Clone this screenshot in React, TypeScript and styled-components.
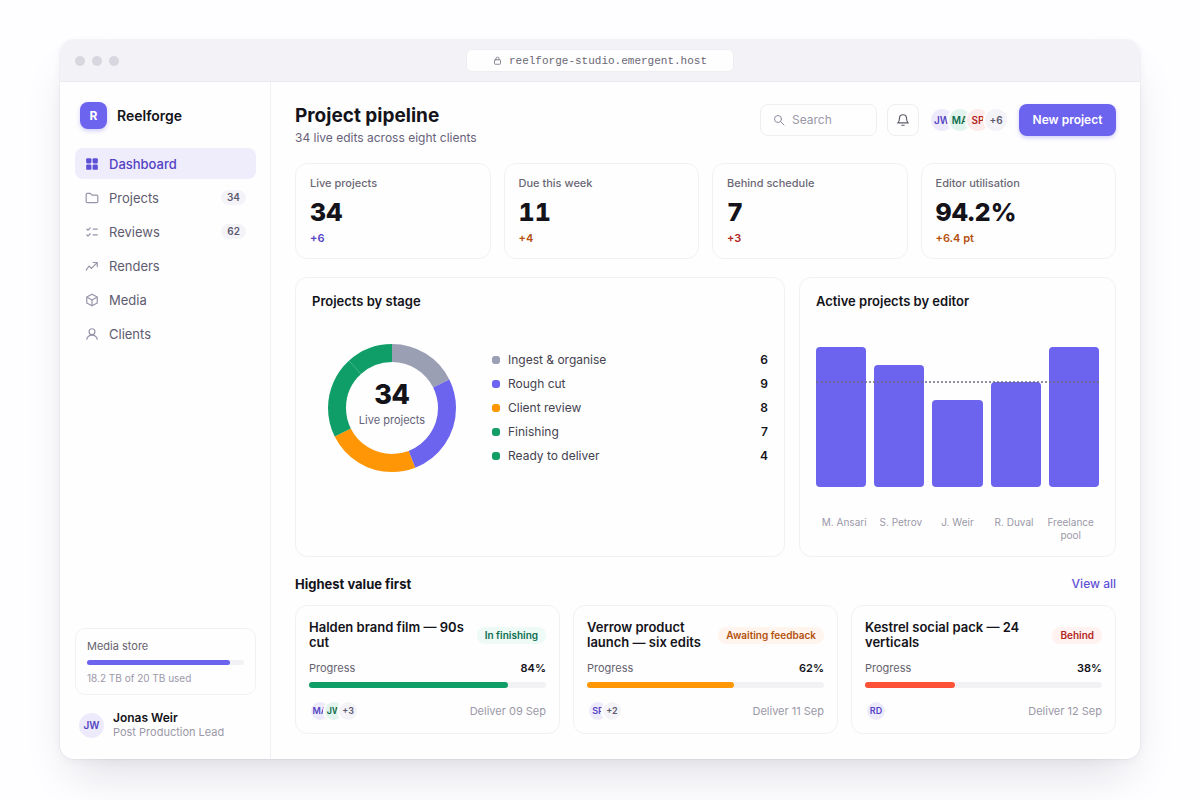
import React from "react";
import styled, { createGlobalStyle } from "styled-components";

const accent = "#6c63ee";

const tones = {
  violet: { fg: "#5443c3", bg: "#edebfb", soft: "#f3f1fd" },
  green: { fg: "#0b6e4f", bg: "#e3f4ee", soft: "#eefaf6" },
  red: { fg: "#b3261e", bg: "#fdeaea", soft: "#fff2f0" },
  grey: { fg: "#5d5970", bg: "#f4f3f7", soft: "#f7f6fa" },
  orange: { fg: "#b4500b", bg: "#fff3ea", soft: "#fff5ee" },
};
type Tone = keyof typeof tones;

const GlobalStyle = createGlobalStyle`
  *, *::before, *::after { box-sizing: border-box; }
  body {
    margin: 0;
    background: #fefdff;
    color: #14131a;
    font-family: Inter, "Liberation Sans", sans-serif;
    font-size: 13px;
    line-height: 16px;
  }
  h1, h2, h3, p, ul, dl, dd { margin: 0; padding: 0; }
  ul { list-style: none; }
  a { color: inherit; text-decoration: none; }
  button, input { font: inherit; }
`;

const Page = styled.div`
  display: flex;
  min-height: 100vh;
  padding: 40px 60px 41px;
`;

const Window = styled.div`
  flex: 1;
  min-width: 0;
  display: flex;
  flex-direction: column;
  border-radius: 14px;
  overflow: hidden;
  background: #fefefe;
  box-shadow: 0 0 0 1px rgba(24, 20, 50, 0.03), 0 24px 48px -12px rgba(24, 20, 50, 0.14), 0 2px 8px rgba(24, 20, 50, 0.04);
`;

const TitleBar = styled.div`
  display: grid;
  grid-template-columns: 1fr auto 1fr;
  align-items: center;
  height: 42px;
  padding: 0 15px;
  background: #f3f2f7;
  border-bottom: 1px solid #ebeaf0;
`;

const Lights = styled.div`
  display: flex;
  gap: 7px;
`;

const Light = styled.span`
  width: 10px;
  height: 10px;
  border-radius: 50%;
  background: #d8d6de;
`;

const Address = styled.div`
  display: flex;
  align-items: center;
  justify-content: center;
  gap: 7px;
  width: 268px;
  height: 23px;
  border: 1px solid #eeedf2;
  border-radius: 6px;
  background: #fefefe;
  color: #6a6775;
  font: 11px/14px "Liberation Mono", monospace;
`;

const Body = styled.div`
  flex: 1;
  display: flex;
`;

const Sidebar = styled.aside`
  flex: none;
  display: flex;
  flex-direction: column;
  width: 211px;
  padding: 20px 14px 19px 15px;
  border-right: 1px solid #f1f0f5;
`;

const Brand = styled.div`
  display: flex;
  align-items: center;
  gap: 10px;
  padding: 0 5px;
  margin-bottom: 19px;
  font-size: 14px;
  font-weight: 600;
`;

const BrandMark = styled.span`
  display: grid;
  place-items: center;
  width: 27px;
  height: 27px;
  border-radius: 8px;
  background: ${accent};
  box-shadow: 0 2px 4px rgba(108, 99, 238, 0.3);
  color: #fff;
  font-size: 12px;
  font-weight: 700;
`;

const Nav = styled.nav`
  display: flex;
  flex-direction: column;
  gap: 3px;
`;

const NavLink = styled.a<{ $active?: boolean }>`
  display: flex;
  align-items: center;
  gap: 10px;
  height: 31px;
  padding: 0 10px;
  border-radius: 8px;
  background: ${(p) => (p.$active ? "#efecfc" : "transparent")};
  color: ${(p) => (p.$active ? "#5443c3" : "#5f5b70")};
  font-weight: ${(p) => (p.$active ? 500 : 400)};
  svg { color: ${(p) => (p.$active ? "#5f51d6" : "#9692a8")}; }
`;

const Count = styled.span`
  margin-left: auto;
  padding: 0 6px;
  border-radius: 8px;
  background: #f4f3f8;
  color: #5d5970;
  font-size: 10px;
  font-weight: 600;
  line-height: 15px;
`;

const Storage = styled.section`
  display: flex;
  flex-direction: column;
  margin-top: auto;
  padding: 10px 11px 9px;
  border: 1px solid #f1f0f5;
  border-radius: 10px;
  font-size: 11px;
  line-height: 14px;
`;

const Muted = styled.span`
  color: #66636f;
`;

const Faint = styled.span`
  color: #9b98a8;
`;

const StorageNote = styled(Faint)`
  font-size: 10px;
`;

const Track = styled.div<{ $size: number; $gap: string }>`
  height: ${(p) => p.$size}px;
  margin: ${(p) => p.$gap};
  border-radius: 3px;
  background: #f2f2f5;
`;

const Fill = styled.div<{ $color: string }>`
  height: 100%;
  border-radius: 3px;
  background: ${(p) => p.$color};
`;

const User = styled.div`
  display: flex;
  align-items: center;
  gap: 9px;
  margin-top: 15px;
  padding: 0 4px;
  font-size: 11px;
  line-height: 15px;
`;

const UserAvatar = styled.span`
  display: grid;
  place-items: center;
  width: 25px;
  height: 25px;
  border-radius: 50%;
  background: #edebfb;
  color: #5443c3;
  font-size: 10px;
  font-weight: 600;
`;

const UserText = styled.div`
  display: flex;
  flex-direction: column;
  strong { font-size: 12px; font-weight: 600; }
`;

const Main = styled.main`
  flex: 1;
  min-width: 0;
  display: flex;
  flex-direction: column;
  gap: 18px;
  padding: 22px 24px 24px;
`;

const Header = styled.header`
  display: flex;
  align-items: flex-start;
  justify-content: space-between;
`;

const Title = styled.h1`
  font-size: 19px;
  font-weight: 700;
  line-height: 23px;
`;

const Subtitle = styled.p`
  margin-top: 3px;
  color: #66627a;
  font-size: 12px;
  line-height: 15px;
`;

const Actions = styled.div`
  display: flex;
  align-items: center;
  gap: 10px;
`;

const SearchBox = styled.label`
  display: flex;
  align-items: center;
  gap: 7px;
  width: 117px;
  height: 32px;
  padding: 0 12px;
  border: 1px solid #eeedf2;
  border-radius: 8px;
  color: #8f8ca0;
  input {
    flex: 1;
    min-width: 0;
    padding: 0;
    border: 0;
    outline: 0;
    background: none;
    color: inherit;
    font-size: 12px;
  }
  input::placeholder { color: #9b98a8; opacity: 1; }
`;

const IconButton = styled.button`
  display: grid;
  place-items: center;
  width: 32px;
  height: 32px;
  padding: 0;
  border: 1px solid #eeedf2;
  border-radius: 8px;
  background: none;
  color: #5f5c6b;
`;

const PrimaryButton = styled.button`
  min-width: 97px;
  height: 32px;
  padding: 0 13px;
  border: 0;
  border-radius: 8px;
  background: ${accent};
  box-shadow: 0 2px 4px rgba(108, 99, 238, 0.3);
  color: #fff;
  font-size: 12px;
  font-weight: 600;
`;

const Stack = styled.div`
  display: flex;
`;

const Avatar = styled.span<{ $tone: Tone; $large?: boolean }>`
  display: grid;
  place-items: center;
  width: ${(p) => (p.$large ? 26 : 22)}px;
  height: ${(p) => (p.$large ? 26 : 22)}px;
  border: 2px solid #fefefe;
  border-radius: 50%;
  background: ${(p) => tones[p.$tone].bg};
  color: ${(p) => tones[p.$tone].fg};
  font-size: ${(p) => (p.$large ? 10 : 9)}px;
  font-weight: 600;
  & + & { margin-left: -8px; }
`;

const Card = styled.section`
  border: 1px solid #f1f0f5;
  border-radius: 12px;
  background: #fefefe;
`;

const Stats = styled.div`
  display: grid;
  grid-template-columns: repeat(4, 1fr);
  gap: 13px;
`;

const StatCard = styled(Card)`
  display: flex;
  flex-direction: column;
  padding: 12px 14px;
`;

const StatLabel = styled.h2`
  color: #6b6875;
  font-size: 11px;
  font-weight: 500;
  line-height: 15px;
`;

const StatValue = styled.p`
  margin: 6px 0 4px;
  font-size: 25px;
  font-weight: 800;
  font-variant-numeric: tabular-nums;
  line-height: 30px;
`;

const Delta = styled.p<{ $tone: Tone }>`
  color: ${(p) => tones[p.$tone].fg};
  font-size: 11px;
  font-weight: 600;
  line-height: 15px;
`;

const Charts = styled.div`
  display: grid;
  grid-template-columns: minmax(0, 1.545fr) minmax(0, 1fr);
  gap: 14px;
`;

const ChartCard = styled(Card)`
  min-height: 280px;
  padding: 15px 16px 14px;
`;

const ChartTitle = styled.h2`
  font-size: 13px;
  font-weight: 600;
  line-height: 16px;
`;

const StageRow = styled.div`
  display: flex;
  align-items: center;
  gap: 20px;
  margin-top: 19px;
`;

const DonutBox = styled.div`
  display: grid;
  flex: none;
  width: 160px;
  height: 160px;
  > * { grid-area: 1 / 1; }
`;

const DonutLabel = styled.div`
  display: flex;
  flex-direction: column;
  align-items: center;
  justify-content: center;
  gap: 1px;
  padding-bottom: 9px;
  color: #66627a;
  font-size: 11px;
  strong {
    color: #14131a;
    font-size: 27px;
    font-weight: 800;
    font-variant-numeric: tabular-nums;
    line-height: 32px;
  }
`;

const Legend = styled.ul`
  flex: 1;
  font-size: 12px;
  line-height: 24px;
`;

const LegendItem = styled.li`
  display: flex;
  align-items: center;
  gap: 8px;
  color: #44424e;
  strong { margin-left: auto; color: #14131a; font-weight: 600; }
`;

const Swatch = styled.span<{ $color: string }>`
  width: 8px;
  height: 8px;
  border-radius: 3px;
  background: ${(p) => p.$color};
`;

const Plot = styled.div`
  position: relative;
  display: flex;
  align-items: flex-end;
  gap: 8px;
  height: 140px;
  margin-top: 38px;
`;

const Bar = styled.div`
  flex: 1;
  border-radius: 4px;
  background: ${accent};
`;

const TargetLine = styled.div`
  position: absolute;
  left: 0;
  right: 0;
  margin-bottom: -1px;
  border-top: 2px dotted rgba(108, 106, 128, 0.75);
`;

const BarLabels = styled.div`
  display: grid;
  grid-template-columns: repeat(5, 1fr);
  margin-top: 29px;
  color: #9b98a8;
  font-size: 10px;
  line-height: 13px;
  text-align: center;
`;

const Priority = styled.section`
  display: flex;
  flex-direction: column;
  gap: 12px;
`;

const PriorityHead = styled.div`
  display: flex;
  align-items: center;
  justify-content: space-between;
  line-height: 18px;
  a { color: #5f51d6; font-size: 12px; font-weight: 500; }
`;

const PriorityTitle = styled(ChartTitle)`
  font-weight: 700;
`;

const ProjectGrid = styled.div`
  display: grid;
  grid-template-columns: repeat(3, minmax(0, 1fr));
  gap: 13px;
`;

const ProjectCard = styled(Card)`
  padding: 14px 13px 11px;
`;

const Row = styled.div`
  display: flex;
  align-items: center;
  justify-content: space-between;
  gap: 8px;
`;

const ProjectName = styled.h3`
  font-size: 13px;
  font-weight: 600;
  line-height: 15px;
`;

const Status = styled.span<{ $tone: Tone }>`
  flex: none;
  padding: 0 8px;
  border-radius: 8px;
  background: ${(p) => tones[p.$tone].soft};
  color: ${(p) => tones[p.$tone].fg};
  font-size: 10px;
  font-weight: 600;
  line-height: 17px;
`;

const ProgressRow = styled(Row)`
  margin-top: 11px;
  font-size: 11px;
  line-height: 15px;
  strong { font-weight: 600; }
`;

const Due = styled(Faint)`
  font-size: 11px;
`;

const Icon = ({ size = 14, children }: { size?: number; children: React.ReactNode }) => (
  <svg width={size} height={size} viewBox="0 0 24 24" fill="none" stroke="currentColor" strokeWidth="2" strokeLinecap="round" strokeLinejoin="round" aria-hidden="true">
    {children}
  </svg>
);

const navItems = [
  {
    label: "Dashboard",
    icon: (
      <g fill="currentColor" stroke="none">
        <rect x="2" y="2" width="9" height="9" rx="2" />
        <rect x="13" y="2" width="9" height="9" rx="2" />
        <rect x="2" y="13" width="9" height="9" rx="2" />
        <rect x="13" y="13" width="9" height="9" rx="2" />
      </g>
    ),
  },
  { label: "Projects", count: 34, icon: <path d="M2 6a2 2 0 0 1 2-2h5l3 3h8a2 2 0 0 1 2 2v9a2 2 0 0 1-2 2H4a2 2 0 0 1-2-2z" /> },
  { label: "Reviews", count: 62, icon: <path d="M3 7l2 2 4-4M3 17l2 2 4-4M14 7h7M14 17h7" /> },
  { label: "Renders", icon: <path d="M2 19l5-7 4 4 9-9M14 6h7v7" /> },
  { label: "Media", icon: <path d="M12 2l9 5v10l-9 5-9-5V7zM3 7l9 5 9-5M12 12v10" /> },
  {
    label: "Clients",
    icon: (
      <>
        <circle cx="12" cy="8" r="5" />
        <path d="M3 21c1-4 4-7 9-7s8 3 9 7" />
      </>
    ),
  },
];

const stats: { label: string; value: string; delta: string; tone: Tone }[] = [
  { label: "Live projects", value: "34", delta: "+6", tone: "violet" },
  { label: "Due this week", value: "11", delta: "+4", tone: "orange" },
  { label: "Behind schedule", value: "7", delta: "+3", tone: "red" },
  { label: "Editor utilisation", value: "94.2%", delta: "+6.4 pt", tone: "orange" },
];

const stages = [
  { label: "Ingest & organise", value: 6, color: "#9a9fb3" },
  { label: "Rough cut", value: 9, color: accent },
  { label: "Client review", value: 8, color: "#ff9606" },
  { label: "Finishing", value: 7, color: "#109e68" },
  { label: "Ready to deliver", value: 4, color: "#109e68" },
];

const editors = [
  { name: "M. Ansari", value: 8 },
  { name: "S. Petrov", value: 7 },
  { name: "J. Weir", value: 5 },
  { name: "R. Duval", value: 6 },
  { name: "Freelance pool", value: 8 },
];
const busiest = 8;
const target = 6;

const projects: {
  name: string; status: string; tone: Tone; progress: number; color: string; due: string; people: [string, Tone][];
}[] = [
  { name: "Halden brand film — 90s cut", status: "In finishing", tone: "green", progress: 84, color: "#109e68", due: "Deliver 09 Sep", people: [["MA", "violet"], ["JW", "green"], ["+3", "grey"]] },
  { name: "Verrow product launch — six edits", status: "Awaiting feedback", tone: "orange", progress: 62, color: "#ff9606", due: "Deliver 11 Sep", people: [["SP", "violet"], ["+2", "grey"]] },
  { name: "Kestrel social pack — 24 verticals", status: "Behind", tone: "red", progress: 38, color: "#fb5238", due: "Deliver 12 Sep", people: [["RD", "violet"]] },
];

const Donut = () => {
  const total = stages.reduce((sum, s) => sum + s.value, 0);
  let start = 0;
  return (
    <svg viewBox="0 0 160 160" role="img" aria-label="Projects by stage">
      <g fill="none" strokeWidth="18" transform="rotate(-90 80 80)">
        {stages.map((s) => {
          const offset = start;
          start += s.value;
          return (
            <circle key={s.label} cx="80" cy="80" r="55" stroke={s.color} pathLength={total} strokeDasharray={`${s.value} ${total - s.value}`} strokeDashoffset={-offset} />
          );
        })}
      </g>
    </svg>
  );
};

export default function App() {
  return (
    <Page>
      <GlobalStyle />
      <Window>
        <TitleBar>
          <Lights><Light /><Light /><Light /></Lights>
          <Address>
            <Icon size={9}>
              <rect x="4" y="10" width="16" height="12" rx="2" />
              <path d="M8 10V7a4 4 0 0 1 8 0v3" />
            </Icon>
            reelforge-studio.emergent.host
          </Address>
        </TitleBar>
        <Body>
          <Sidebar>
            <Brand><BrandMark>R</BrandMark>Reelforge</Brand>
            <Nav>
              {navItems.map((item, i) => (
                <NavLink key={item.label} href="#" $active={i === 0}>
                  <Icon>{item.icon}</Icon>
                  {item.label}
                  {item.count && <Count>{item.count}</Count>}
                </NavLink>
              ))}
            </Nav>
            <Storage>
              <Muted>Media store</Muted>
              <Track $size={5} $gap="7px 0 6px"><Fill $color={accent} style={{ width: "91%" }} /></Track>
              <StorageNote>18.2 TB of 20 TB used</StorageNote>
            </Storage>
            <User>
              <UserAvatar>JW</UserAvatar>
              <UserText><strong>Jonas Weir</strong><Faint>Post Production Lead</Faint></UserText>
            </User>
          </Sidebar>
          <Main>
            <Header>
              <div>
                <Title>Project pipeline</Title>
                <Subtitle>34 live edits across eight clients</Subtitle>
              </div>
              <Actions>
                <SearchBox>
                  <Icon size={12}><circle cx="10" cy="10" r="7" /><path d="M15 15l7 7" /></Icon>
                  <input type="search" placeholder="Search" aria-label="Search" />
                </SearchBox>
                <IconButton aria-label="Notifications">
                  <Icon><path d="M6 9a6 6 0 0 1 12 0c0 6 3 8 3 8H3s3-2 3-8M10 21h4" /></Icon>
                </IconButton>
                <Stack>
                  <Avatar $large $tone="violet">JW</Avatar>
                  <Avatar $large $tone="green">MA</Avatar>
                  <Avatar $large $tone="red">SP</Avatar>
                  <Avatar $large $tone="grey">+6</Avatar>
                </Stack>
                <PrimaryButton>New project</PrimaryButton>
              </Actions>
            </Header>
            <Stats>
              {stats.map((s) => (
                <StatCard key={s.label}>
                  <StatLabel>{s.label}</StatLabel>
                  <StatValue>{s.value}</StatValue>
                  <Delta $tone={s.tone}>{s.delta}</Delta>
                </StatCard>
              ))}
            </Stats>
            <Charts>
              <ChartCard>
                <ChartTitle>Projects by stage</ChartTitle>
                <StageRow>
                  <DonutBox>
                    <Donut />
                    <DonutLabel><strong>34</strong>Live projects</DonutLabel>
                  </DonutBox>
                  <Legend>
                    {stages.map((s) => (
                      <LegendItem key={s.label}><Swatch $color={s.color} />{s.label}<strong>{s.value}</strong></LegendItem>
                    ))}
                  </Legend>
                </StageRow>
              </ChartCard>
              <ChartCard>
                <ChartTitle>Active projects by editor</ChartTitle>
                <Plot>
                  {editors.map((e) => <Bar key={e.name} style={{ height: `${(e.value / busiest) * 100}%` }} />)}
                  <TargetLine style={{ bottom: `${(target / busiest) * 100}%` }} />
                </Plot>
                <BarLabels>{editors.map((e) => <span key={e.name}>{e.name}</span>)}</BarLabels>
              </ChartCard>
            </Charts>
            <Priority>
              <PriorityHead><PriorityTitle>Highest value first</PriorityTitle><a href="#">View all</a></PriorityHead>
              <ProjectGrid>
                {projects.map((p) => (
                  <ProjectCard key={p.name}>
                    <Row><ProjectName>{p.name}</ProjectName><Status $tone={p.tone}>{p.status}</Status></Row>
                    <ProgressRow><Muted>Progress</Muted><strong>{p.progress}%</strong></ProgressRow>
                    <Track $size={6} $gap="6px 0 12px"><Fill $color={p.color} style={{ width: `${p.progress}%` }} /></Track>
                    <Row>
                      <Stack>{p.people.map(([who, tone]) => <Avatar key={who} $tone={tone}>{who}</Avatar>)}</Stack>
                      <Due>{p.due}</Due>
                    </Row>
                  </ProjectCard>
                ))}
              </ProjectGrid>
            </Priority>
          </Main>
        </Body>
      </Window>
    </Page>
  );
}
